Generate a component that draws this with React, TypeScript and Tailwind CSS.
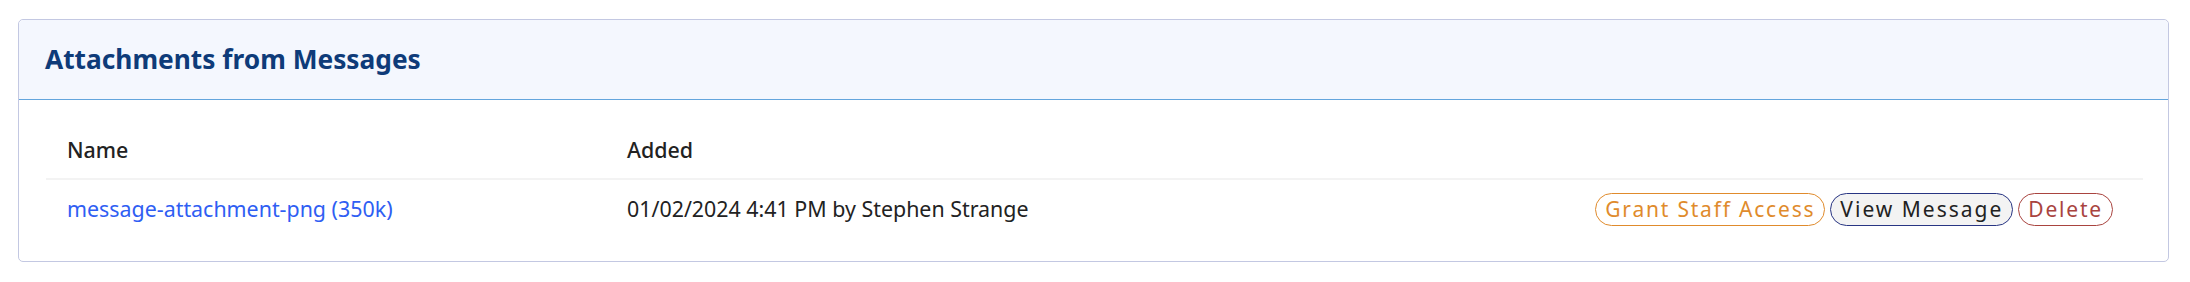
const rows = [
  {
    name: "message-attachment-png (350k)",
    added: "01/02/2024 4:41 PM by Stephen Strange",
  },
]

export default function App() {
  return (
    <div className="min-h-screen bg-white pt-[19px] pl-[18px] pr-[21px] font-['Noto_Sans',sans-serif] text-[#222]">
      <div className="rounded-[5px] border border-[#c3c8e2] bg-white">
        <div className="flex h-[80px] items-center rounded-t-[5px] border-b border-[#63a5dd] bg-[#f4f7fe] px-[26px]">
          <h3 className="text-[26.3px] font-bold text-[#0e3b79]">Attachments from Messages</h3>
        </div>
        <div className="px-[27px] pr-[25px] pt-[23px] pb-[22px]">
          <div className="flex h-[57px] items-center border-b-2 border-[#f3f3f3] text-[21.4px] font-medium">
            <div className="w-[560px] pl-[21px]">Name</div>
            <div className="pl-[21px]">Added</div>
          </div>
          {rows.map((r) => (
            <div key={r.name} className="flex h-[59px] items-center text-[21.4px]">
              <div className="w-[560px] pl-[21px]">
                <a href="#" className="text-[#2f5ef3]">{r.name}</a>
              </div>
              <div className="flex-1 pl-[21px]">{r.added}</div>
              <div className="flex items-center gap-[5px] pr-[30px]">
                <button className="h-[33px] rounded-full border border-[#e08b2c] bg-white px-[9px] text-[21px] leading-none tracking-[1.8px] text-[#e08b2c]">
                  Grant Staff Access
                </button>
                <button className="h-[33px] rounded-full border border-[#283583] bg-[#f3f3f3] px-[9px] text-[21px] leading-none tracking-[2px] text-[#222]">
                  View Message
                </button>
                <button className="h-[33px] rounded-full border border-[#a9443f] bg-white px-[9px] text-[21px] leading-none tracking-[1.8px] text-[#a9443f]">
                  Delete
                </button>
              </div>
            </div>
          ))}
        </div>
      </div>
    </div>
  )
}
